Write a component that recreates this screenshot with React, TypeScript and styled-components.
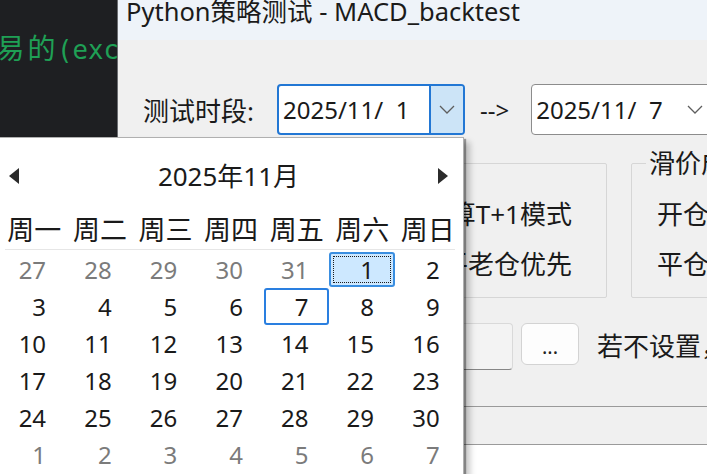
import React from "react";
import styled, { createGlobalStyle } from "styled-components";

const UI_FONT = `"Noto Sans", "Noto Sans CJK SC", sans-serif`;

const GlobalStyle = createGlobalStyle`
    html, body {
        margin: 0;
        padding: 0;
        background: #ffffff;
    }
    body {
        font-family: ${UI_FONT};
        color: #1a1a1a;
    }
    * {
        box-sizing: border-box;
    }
`;

const Desktop = styled.div`
    position: relative;
    width: 707px;
    height: 474px;
    overflow: hidden;
    background: #ffffff;
`;

const Terminal = styled.div`
    position: absolute;
    left: 0;
    top: 0;
    width: 118px;
    height: 138px;
    background: #1e1f22;
    border-right: 1px solid #6b6d71;
    overflow: hidden;
    padding-top: 33px;
`;

const TermLine = styled.div`
    font-family: "DejaVu Sans Mono", "Noto Sans CJK SC", monospace;
    font-size: 25.7px;
    line-height: 34px;
    color: #1fa055;
    white-space: nowrap;
    margin-left: -36px;
`;

const Wide = styled.span`
    display: inline-block;
    width: 31px;
    text-align: center;
    font-size: 28px;
`;

const Window = styled.div`
    position: absolute;
    left: 118px;
    top: 0;
    width: 600px;
    height: 474px;
    display: flex;
    flex-direction: column;
    background: #f0f0f0;
`;

const TitleBar = styled.div`
    height: 40px;
    flex-shrink: 0;
    background: #eef3f9;
    padding-left: 8px;
    font-size: 25.5px;
    line-height: 22px;
    color: #1b1b1b;
    white-space: nowrap;
`;

const Body = styled.div`
    flex: 1;
    display: flex;
    flex-direction: column;
    padding-top: 44px;
`;

const PickerRow = styled.div`
    display: flex;
    align-items: center;
    height: 51px;
    padding-left: 25px;
`;

const FieldLabel = styled.div`
    width: 134px;
    flex-shrink: 0;
    font-size: 26px;
    white-space: nowrap;
`;

const Picker = styled.div<{ $focused?: boolean; $width: number }>`
    width: ${p => p.$width}px;
    height: 51px;
    flex-shrink: 0;
    display: flex;
    background: #ffffff;
    border: ${p => (p.$focused ? "2px solid #2277d4" : "1.5px solid #8c8c8c")};
    border-radius: 4px;
    overflow: hidden;
`;

const PickerText = styled.div`
    flex: 1;
    display: flex;
    align-items: center;
    padding-left: 4px;
    font-size: 24px;
    white-space: pre;
`;

const PickerButton = styled.div<{ $focused?: boolean }>`
    width: 34px;
    display: flex;
    align-items: center;
    justify-content: center;
    background: ${p => (p.$focused ? "#cce4f7" : "transparent")};
    border-left: ${p => (p.$focused ? "2px solid #2277d4" : "none")};
`;

const Arrow = styled.div`
    margin: 0 22px 0 15px;
    font-size: 24px;
    flex-shrink: 0;
`;

const GroupRow = styled.div`
    display: flex;
    margin-top: 15px;
    padding-left: 169px;
`;

const GroupBox = styled.fieldset<{ $width: number }>`
    width: ${p => p.$width}px;
    height: 148px;
    margin: 0;
    padding: 0;
    border: 1px solid #d6d6d6;
    border-radius: 2px;
    flex-shrink: 0;
    & + & {
        margin-left: 24px;
    }
`;

const GroupTitle = styled.legend`
    margin-left: 14px;
    padding: 0 3px;
    font-size: 26px;
    line-height: 26px;
    white-space: nowrap;
`;

const GroupItems = styled.div<{ $right?: boolean }>`
    display: flex;
    flex-direction: column;
    padding-top: 13px;
    text-align: ${p => (p.$right ? "right" : "left")};
    padding-right: ${p => (p.$right ? 34 : 0)}px;
    padding-left: ${p => (p.$right ? 0 : 25)}px;
`;

const GroupItem = styled.div`
    height: 50px;
    line-height: 50px;
    font-size: 26px;
    white-space: nowrap;
`;

const InputRow = styled.div`
    display: flex;
    align-items: flex-start;
    height: 47px;
    margin-top: 25px;
    padding-left: 150px;
`;

const TextInput = styled.div`
    width: 245px;
    height: 47px;
    flex-shrink: 0;
    background: #f3f3f3;
    border: 1px solid #d9d9d9;
    border-bottom: 1.5px solid #868686;
    border-radius: 4px;
`;

const DotsButton = styled.div`
    width: 58px;
    height: 42px;
    flex-shrink: 0;
    margin-left: 8px;
    background: #fdfdfd;
    border: 1px solid #d3d3d3;
    border-radius: 6px;
    display: flex;
    align-items: flex-end;
    justify-content: center;
    padding-bottom: 7px;
    font-size: 20px;
    line-height: 20px;
    color: #222;
`;

const Hint = styled.div`
    margin-left: 18px;
    font-size: 26px;
    line-height: 47px;
    white-space: nowrap;
`;

const StatusStrip = styled.div`
    margin-top: 36px;
    height: 39px;
    border-top: 1px solid #9a9a9a;
    border-bottom: 1px solid #9a9a9a;
`;

const LogArea = styled.div`
    flex: 1;
    background: #ffffff;
`;

const Popup = styled.div`
    position: absolute;
    left: -1px;
    top: 137px;
    width: 465px;
    height: 345px;
    background: #ffffff;
    border: 1px solid #b0b0b0;
    box-shadow: 2px 2px 1px rgba(0, 0, 0, 0.35), 6px 5px 6px rgba(0, 0, 0, 0.22);
`;

const CalHeader = styled.div`
    display: flex;
    align-items: center;
    height: 34px;
    margin-top: 21px;
    padding: 0 15px 0 9px;
`;

const CalTitle = styled.div`
    flex: 1;
    text-align: center;
    font-size: 26px;
    line-height: 34px;
`;

const WeekRow = styled.div`
    display: grid;
    grid-template-columns: repeat(7, 65.6px);
    margin: 20px 0 0 1.5px;
    height: 34px;
`;

const WeekDay = styled.div`
    text-align: center;
    font-size: 27px;
    line-height: 34px;
    white-space: nowrap;
`;

const Separator = styled.div`
    height: 1px;
    margin: 2px 8px 0 5px;
    background: #e6e6e6;
`;

const DayGrid = styled.div`
    display: grid;
    grid-template-columns: repeat(7, 65.6px);
    grid-auto-rows: 37px;
    margin: 1px 0 0 1.5px;
`;

type Variant = "selected" | "today";

const DayCell = styled.div<{ $muted?: boolean; $variant?: Variant }>`
    display: flex;
    align-items: center;
    justify-content: flex-end;
    padding-right: ${p => (p.$variant ? 19 : 21)}px;
    font-size: 24px;
    color: ${p => (p.$muted ? "#7b7b7b" : "#1a1a1a")};
    ${p =>
        p.$variant === "selected" &&
        `
        margin: 1px 0;
        background: #cde8ff;
        border: 2px solid #3a8ee0;
        border-radius: 3px;
        outline: 1.5px dotted #1a1a1a;
        outline-offset: -5px;
    `}
    ${p =>
        p.$variant === "today" &&
        `
        border: 2px solid #2a7fe0;
        border-radius: 3px;
    `}
`;

const Chevron = () => (
    <svg width="16" height="9" viewBox="0 0 16 9">
        <polyline points="1,1 8,8 15,1" fill="none" stroke="#5e5e5e" strokeWidth="1.3" />
    </svg>
);

const Triangle = ({ right }: { right?: boolean }) => (
    <svg width="10" height="16" viewBox="0 0 10 16">
        <polygon points={right ? "0,0 10,8 0,16" : "10,0 0,8 10,16"} fill="#2b2b2b" />
    </svg>
);

const weekDays = ["周一", "周二", "周三", "周四", "周五", "周六", "周日"];

const buildDays = () => {
    const list: { n: number; muted?: boolean; variant?: Variant }[] = [];
    for (let d = 27; d <= 31; d++) list.push({ n: d, muted: true });
    for (let d = 1; d <= 30; d++) {
        list.push({ n: d, variant: d === 1 ? "selected" : d === 7 ? "today" : undefined });
    }
    for (let d = 1; d <= 7; d++) list.push({ n: d, muted: true });
    return list;
};

const App = () => {
    const days = buildDays();
    return (
        <Desktop>
            <GlobalStyle />
            <Terminal>
                <TermLine>
                    <Wide>交</Wide>
                    <Wide>易</Wide>
                    <Wide>的</Wide>(exchange
                </TermLine>
            </Terminal>

            <Window>
                <TitleBar>Python策略测试 - MACD_backtest</TitleBar>
                <Body>
                    <PickerRow>
                        <FieldLabel>测试时段:</FieldLabel>
                        <Picker $focused $width={188}>
                            <PickerText>2025/11/  1</PickerText>
                            <PickerButton $focused>
                                <Chevron />
                            </PickerButton>
                        </Picker>
                        <Arrow>--&gt;</Arrow>
                        <Picker $width={182}>
                            <PickerText>2025/11/  7</PickerText>
                            <PickerButton>
                                <Chevron />
                            </PickerButton>
                        </Picker>
                    </PickerRow>

                    <GroupRow>
                        <GroupBox $width={320}>
                            <GroupTitle>交易规则</GroupTitle>
                            <GroupItems $right>
                                <GroupItem>计算T+1模式</GroupItem>
                                <GroupItem>平老仓优先</GroupItem>
                            </GroupItems>
                        </GroupBox>
                        <GroupBox $width={200}>
                            <GroupTitle>滑价成本</GroupTitle>
                            <GroupItems>
                                <GroupItem>开仓滑价</GroupItem>
                                <GroupItem>平仓滑价</GroupItem>
                            </GroupItems>
                        </GroupBox>
                    </GroupRow>

                    <InputRow>
                        <TextInput />
                        <DotsButton>...</DotsButton>
                        <Hint>若不设置，则使用默认</Hint>
                    </InputRow>

                    <StatusStrip />
                    <LogArea />
                </Body>
            </Window>

            <Popup>
                <CalHeader>
                    <Triangle />
                    <CalTitle>2025年11月</CalTitle>
                    <Triangle right />
                </CalHeader>
                <WeekRow>
                    {weekDays.map(w => (
                        <WeekDay key={w}>{w}</WeekDay>
                    ))}
                </WeekRow>
                <Separator />
                <DayGrid>
                    {days.map((d, i) => (
                        <DayCell key={i} $muted={d.muted} $variant={d.variant}>
                            {d.n}
                        </DayCell>
                    ))}
                </DayGrid>
            </Popup>
        </Desktop>
    );
};

export default App;
